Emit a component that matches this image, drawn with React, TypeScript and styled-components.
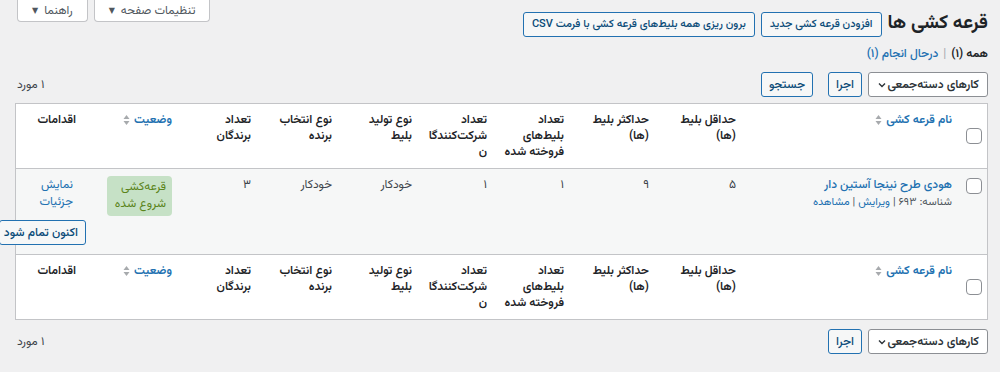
import React from 'react';
import styled, { createGlobalStyle } from 'styled-components';

const GlobalStyle = createGlobalStyle`
  html, body {
    margin: 0;
    padding: 0;
    background: #f0f0f1;
  }
  body {
    direction: rtl;
    font-family: Vazirmatn, "Noto Sans Arabic", "DejaVu Sans", sans-serif;
    font-size: 13px;
    color: #3c434a;
  }
`;

const Page = styled.div`
  width: 1000px;
  box-sizing: border-box;
  padding: 0 12px 0 17px;
`;

const TopRow = styled.div`
  display: flex;
  justify-content: space-between;
  align-items: flex-start;
`;

const TitleGroup = styled.div`
  display: flex;
  align-items: center;
  gap: 6px;
  margin-top: 10px;
`;

const Title = styled.h1`
  margin: 0;
  font-size: 19px;
  font-weight: 700;
  color: #1d2327;
  line-height: 28px;
`;

const Button = styled.button<{ $small?: boolean }>`
  height: 25px;
  box-sizing: border-box;
  padding: 0 ${p => (p.$small ? 7 : 8)}px;
  border: 1px solid #2271b1;
  border-radius: 3px;
  background: #f6f7f7;
  color: #0a4b78;
  font-family: inherit;
  font-size: ${p => (p.$small ? 12 : 11)}px;
  font-weight: 500;
  white-space: nowrap;
  cursor: pointer;
`;

const MetaLinks = styled.div`
  display: flex;
  gap: 6px;
`;

const MetaTab = styled.button`
  height: 22px;
  box-sizing: border-box;
  display: flex;
  align-items: center;
  gap: 6px;
  padding: 0 14px;
  background: #fff;
  border: 1px solid #c3c4c7;
  border-top: none;
  border-radius: 0 0 4px 4px;
  color: #50575e;
  font-family: inherit;
  font-size: 12px;
`;

const Caret = styled.span`
  font-size: 8px;
  color: #50575e;
`;

const SubSub = styled.div`
  margin-top: 7px;
  font-size: 12px;
  line-height: 18px;
  color: #1d2327;
  font-weight: 600;
`;

const Sep = styled.span`
  color: #a7aaad;
  margin: 0 5px;
  font-weight: 400;
`;

const Link = styled.a`
  color: #2271b1;
  text-decoration: none;
  font-weight: 500;
`;

const Nav = styled.div`
  display: flex;
  justify-content: space-between;
  align-items: center;
  margin-top: 9px;
  height: 25px;
`;

const NavActions = styled.div`
  display: flex;
  align-items: center;
  gap: 6px;
`;

const SearchBtn = styled(Button)`
  margin-right: 9px;
`;

const Select = styled.div`
  width: 120px;
  height: 25px;
  box-sizing: border-box;
  display: flex;
  align-items: center;
  justify-content: space-between;
  padding: 0 8px;
  background: #fff;
  border: 1px solid #8c8f94;
  border-radius: 3px;
  color: #2c3338;
  font-size: 12px;
  font-weight: 600;
`;

const Count = styled.span`
  font-size: 12px;
  color: #3c434a;
`;

const Table = styled.table`
  width: 100%;
  margin-top: 6px;
  border: 1px solid #c3c4c7;
  border-spacing: 0;
  table-layout: fixed;
  background: #fff;
`;

const Th = styled.th<{ $foot?: boolean }>`
  text-align: right;
  vertical-align: top;
  padding: 8px 10px;
  font-size: 12px;
  line-height: 16px;
  font-weight: 600;
  color: #1d2327;
  white-space: nowrap;
  ${p => (p.$foot ? 'border-top: 1px solid #c3c4c7;' : 'border-bottom: 1px solid #c3c4c7;')}
`;

const CheckTh = styled(Th)`
  vertical-align: middle;
  padding: 0 5px 0 0;
`;

const SortLink = styled.a`
  color: #2271b1;
  text-decoration: none;
  display: inline-flex;
  align-items: center;
  gap: 4px;
`;

const Body = styled.tbody`
  tr {
    background: #f6f7f7;
  }
`;

const Td = styled.td`
  text-align: right;
  vertical-align: top;
  padding: 8px 10px 9px;
  font-size: 12px;
  line-height: 17px;
  color: #3c434a;
`;

const CheckTd = styled(Td)`
  padding: 9px 5px 0 0;
`;

const Box = styled.span`
  display: block;
  width: 16px;
  height: 16px;
  box-sizing: border-box;
  border: 1px solid #8c8f94;
  border-radius: 4px;
  background: #fff;
`;

const RowTitle = styled.a`
  color: #2271b1;
  font-weight: 500;
  text-decoration: none;
`;

const RowActions = styled.div`
  font-size: 11px;
  color: #50575e;
  a {
    color: #2271b1;
    text-decoration: none;
  }
`;

const Badge = styled.span`
  display: inline-block;
  padding: 3px 6px 3px 8px;
  margin-top: -1px;
  background: #c6e1c6;
  color: #5b841b;
  border-radius: 4px;
  line-height: 17px;
  white-space: nowrap;
`;

const ActionCell = styled(Td)`
  overflow: visible;
`;

const ActionLink = styled.a`
  display: block;
  color: #2271b1;
  text-decoration: none;
  margin-right: 3px;
  white-space: nowrap;
`;

const FinishBtn = styled(Button)`
  margin-top: 9px;
  width: 87px;
  margin-left: -27px;
  float: left;
`;

const SortIcon = () => (
  <svg width="7" height="12" viewBox="0 0 7 12">
    <path d="M3.5 1 L6.5 5 H0.5 Z" fill="#a7aaad" />
    <path d="M3.5 11 L6.5 7 H0.5 Z" fill="#a7aaad" />
  </svg>
);

const Chevron = () => (
  <svg width="10" height="10" viewBox="0 0 10 10">
    <path d="M2 3.5 L5 6.5 L8 3.5" fill="none" stroke="#2c3338" strokeWidth="1.4" />
  </svg>
);

const widths = [25, 216, 87, 85, 77, 75, 80, 81, 79, 96, 70];

function HeaderRow({ foot }: { foot?: boolean }) {
  return (
    <tr>
      <CheckTh $foot={foot}><Box /></CheckTh>
      <Th $foot={foot}><SortLink>نام قرعه کشی <SortIcon /></SortLink></Th>
      <Th $foot={foot}>حداقل بلیط<br />(ها)</Th>
      <Th $foot={foot}>حداکثر بلیط<br />(ها)</Th>
      <Th $foot={foot}>تعداد<br />بلیط‌های<br />فروخته شده</Th>
      <Th $foot={foot}>تعداد<br />شرکت‌کنندگا<br />ن</Th>
      <Th $foot={foot}>نوع تولید<br />بلیط</Th>
      <Th $foot={foot}>نوع انتخاب<br />برنده</Th>
      <Th $foot={foot}>تعداد<br />برندگان</Th>
      <Th $foot={foot}><SortLink>وضعیت <SortIcon /></SortLink></Th>
      <Th $foot={foot}>اقدامات</Th>
    </tr>
  );
}

export default function App() {
  return (
    <Page>
      <GlobalStyle />
      <TopRow>
        <TitleGroup>
          <Title>قرعه کشی ها</Title>
          <Button>افزودن قرعه کشی جدید</Button>
          <Button>برون ریزی همه بلیط‌های قرعه کشی با فرمت CSV</Button>
        </TitleGroup>
        <MetaLinks>
          <MetaTab>تنظیمات صفحه <Caret>▼</Caret></MetaTab>
          <MetaTab>راهنما <Caret>▼</Caret></MetaTab>
        </MetaLinks>
      </TopRow>

      <SubSub>
        همه (۱)<Sep>|</Sep><Link>درحال انجام (۱)</Link>
      </SubSub>

      <Nav>
        <NavActions>
          <Select>کارهای دسته‌جمعی <Chevron /></Select>
          <Button $small>اجرا</Button>
          <SearchBtn $small>جستجو</SearchBtn>
        </NavActions>
        <Count>۱ مورد</Count>
      </Nav>

      <Table>
        <colgroup>
          {widths.map((w, i) => <col key={i} style={{ width: w }} />)}
        </colgroup>
        <thead>
          <HeaderRow />
        </thead>
        <Body>
          <tr>
            <CheckTd><Box /></CheckTd>
            <Td>
              <RowTitle>هودی طرح نینجا آستین دار</RowTitle>
              <RowActions>شناسه: ۶۹۳ | <a>ویرایش</a> | <a>مشاهده</a></RowActions>
            </Td>
            <Td>۵</Td>
            <Td>۹</Td>
            <Td>۱</Td>
            <Td>۱</Td>
            <Td>خودکار</Td>
            <Td>خودکار</Td>
            <Td>۳</Td>
            <Td><Badge>قرعه‌کشی<br />شروع شده</Badge></Td>
            <ActionCell>
              <ActionLink>نمایش</ActionLink>
              <ActionLink>جزئیات</ActionLink>
              <FinishBtn $small>اکنون تمام شود</FinishBtn>
            </ActionCell>
          </tr>
        </Body>
        <tfoot>
          <HeaderRow foot />
        </tfoot>
      </Table>

      <Nav>
        <NavActions>
          <Select>کارهای دسته‌جمعی <Chevron /></Select>
          <Button $small>اجرا</Button>
        </NavActions>
        <Count>۱ مورد</Count>
      </Nav>
    </Page>
  );
}
